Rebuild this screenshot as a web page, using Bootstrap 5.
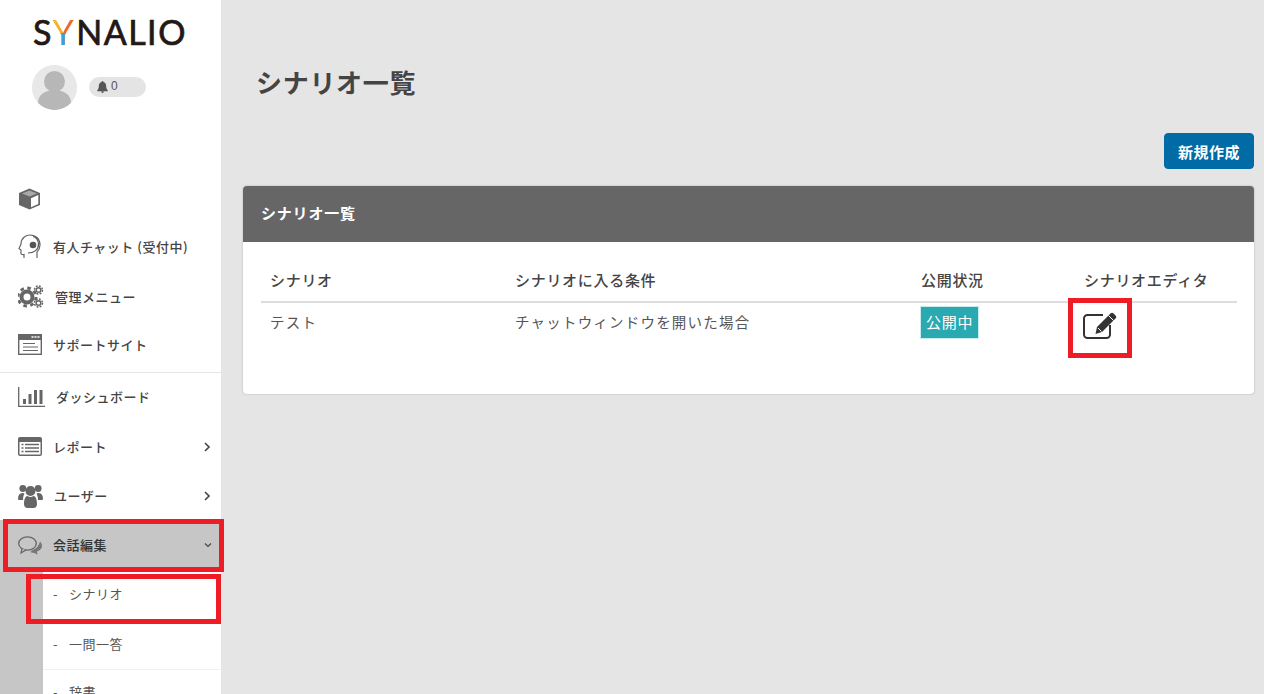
<!DOCTYPE html>
<html lang="ja">
<head>
<meta charset="utf-8">
<title>シナリオ一覧</title>
<link href="https://cdn.jsdelivr.net/npm/bootstrap@5.3.0/dist/css/bootstrap.min.css" rel="stylesheet">
<style>
html,body{height:694px;overflow:hidden}
body{font-family:"Noto Sans CJK JP","Liberation Sans",sans-serif;background:#e5e5e5;color:#444;position:relative}
.side{width:221px;height:694px;background:#fff;flex:none;overflow:hidden}
.brand{height:65px;padding:9px 0 0 33px;font-family:"Lato","Liberation Sans",sans-serif;font-size:34px;line-height:46px;letter-spacing:1.5px;color:#231815;font-weight:400;-webkit-text-stroke:.7px #231815;white-space:nowrap}
.brand-y{background:linear-gradient(#39a0e0,#39a0e0) bottom/100% 46% no-repeat,linear-gradient(90deg,#f6b12d 50%,#f0682b 50%);-webkit-background-clip:text;background-clip:text;color:transparent;-webkit-text-stroke:0;margin-right:1px}
.who{height:109px;padding-left:32px;align-items:flex-start}
.avatar{width:45px;height:45px;border-radius:50%;background:#e8e8e8;display:block}
.bell{width:57px;height:20px;border-radius:10px;background:#e4e4e4;margin:12px 0 0 12px;font-family:"Liberation Sans",sans-serif;font-size:12px;line-height:19px;padding-left:8px;color:#555}
.bell svg{width:11px;height:12px;vertical-align:-3px;margin-right:3px}
.nav-row{height:49.5px;padding-left:18px;padding-right:10px;font-size:13px;font-weight:500;color:#444;text-decoration:none;letter-spacing:.5px}
.nav-row svg.ico{flex:none;fill:#666;margin-right:11px}
.nudge{padding-bottom:2px}
.h49{height:49px}
.h485{height:48.5px}
.nav-sep{border-bottom:1px solid #e5e5e5;height:51px;padding-bottom:5px}
.nav-on{background:#c6c6c6;color:#333;height:50px}
.chev{margin-left:auto;width:8px;height:10px;fill:none;stroke:#444;stroke-width:1.6}
.chev-dn{width:8px;height:6px;margin-right:-1px}
.sub-wrap{background:#c6c6c6;padding-left:43px}
.sub-row{height:50px;background:#fff;border-bottom:1px solid #f1f1f1;padding-left:10px;font-size:13px;font-weight:400;color:#555;line-height:48px;white-space:nowrap;letter-spacing:.5px}
.sub-plain{border-bottom:0}
.sub-last{line-height:44px}
.sub-row i{font-style:normal;margin-right:11px}
.main{flex:1;min-width:0;padding:0 10px 0 22px}
.page-ttl{font-size:26px;font-weight:700;color:#444;line-height:38px;margin:63px 0 32px 13px;letter-spacing:.7px}
.add-btn{background:#006ba4;border:1px solid #006ba4;color:#fff;font-size:15px;font-weight:700;width:90px;height:36px;padding:0;border-radius:4px;line-height:33px;letter-spacing:.5px}
.panel{margin-top:17px;height:208px;border:0;border-radius:4px;box-shadow:0 0 2px rgba(0,0,0,.25)}
.panel-hd{background:#666;color:#fff;height:56px;padding:0 18px;font-size:15px;font-weight:700;line-height:54px;border:0;border-radius:4px 4px 0 0!important;letter-spacing:.8px}
.panel-bd{padding:18px 17px 0 18px}
.tbl{margin:0;table-layout:fixed;width:976px;color:#444;font-size:15px}
.tbl th{font-weight:500;padding:7px 9px 9px;line-height:25px;border-bottom:2px solid #ddd;color:#444;letter-spacing:.7px}
.tbl td{padding:3px 9px;line-height:31px;border:0;color:#555;font-size:14.5px;letter-spacing:1.2px}
.tbl .c1{width:245px}.tbl .c2{width:406px}.tbl .c3{width:163px}
.state{display:inline-block;background:#2aa9b0;color:#fff;border:1px solid #c8ecee;padding:0 5px;height:33px;line-height:30px;font-size:15px;letter-spacing:.8px;vertical-align:top;margin-left:-1px}
.edit-ico{display:block;margin:5px 0 0 -2px}
.red-box{position:absolute;border:5px solid #ee1c25;pointer-events:none}
.rb1{left:3px;top:519px;width:221px;height:53px}
.rb2{left:26px;top:574px;width:195px;height:50px}
.rb3{left:1068px;top:298px;width:64px;height:60px}
</style>
</head>
<body>
<div class="d-flex">
  <aside class="side">
    <div class="brand">S<span class="brand-y">Y</span>NALIO</div>
    <div class="who d-flex">
      <svg class="avatar" viewBox="0 0 45 45"><circle cx="22.500" cy="22.500" r="22.500" fill="#e8e8e8"/><circle cx="22.500" cy="16.500" r="10.500" fill="#b7b7b7"/><path d="M6 38c0-8 7-13 16.500-13S39 30 39 38c-4 4.500-10 7-16.500 7S10 42.500 6 38z" fill="#b7b7b7"/></svg>
      <div class="bell"><svg viewBox="0 0 12 13"><path d="M6 0a1 1 0 0 1 1 1.100C9 1.600 10 3.200 10 5.500c0 2.500.7 3.500 1.700 4.500v1H.3v-1C1.300 9 2 8 2 5.500 2 3.200 3 1.600 5 1.100A1 1 0 0 1 6 0zM4.500 11.500h3A1.500 1.500 0 0 1 4.500 11.500z" fill="#555"/></svg>0</div>
    </div>
    <a class="nav-row h49 d-flex align-items-center">
      <svg class="ico" width="23" height="22" viewBox="0 0 23 22"><path d="M11.500 .5 22 5v12L11.500 21.500 1 17V5z" fill="#666"/><path d="M11.500 2.500 19 5.500 11.500 8.500 4 5.500z" fill="#a8a8a8"/><path d="M13 10.200 20.300 7v9l-7.300 3.200z" fill="#fff"/></svg>
    </a>
    <a class="nav-row nudge d-flex align-items-center">
      <svg class="ico" width="24" height="25" viewBox="0 0 24 25"><path d="M6 24v-3.500c-3 .5-3.500-1.500-3-2.500v-2L1 14.500 3 10C3 4 8 1 12 1c6 0 10 4 10 10 0 3-1 5-3 7v6" fill="none" stroke="#666" stroke-width="1.200"/><circle cx="15" cy="11" r="3.300" fill="#555"/><path d="M15 2.500c3 .3 5.500 3.500 5.500 8 0 5-4.500 8.500-10.500 8.500" fill="none" stroke="#555" stroke-width="1.200"/></svg>
      <span>有人チャット (受付中)</span>
    </a>
    <a class="nav-row nudge d-flex align-items-center">
      <svg class="ico" width="26" height="25" viewBox="0 0 26 25"><g fill="none" stroke="#666"><circle cx="9" cy="13" r="5.500" stroke-width="4"/><circle cx="9" cy="13" r="9" stroke-width="2.800" stroke-dasharray="3.600 3.470"/><circle cx="20.500" cy="6" r="2.300" stroke-width="1.500"/><circle cx="20.500" cy="6" r="4" stroke-width="1.500" stroke-dasharray="1.800 1.340"/><circle cx="20.500" cy="19" r="2.300" stroke-width="1.500"/><circle cx="20.500" cy="19" r="4" stroke-width="1.500" stroke-dasharray="1.800 1.340"/></g></svg>
      <span>管理メニュー</span>
    </a>
    <a class="nav-row nav-sep d-flex align-items-center">
      <svg class="ico" width="24" height="21" viewBox="0 0 24 21"><rect x=".7" y=".7" width="22.600" height="19.600" fill="none" stroke="#666" stroke-width="1.400"/><rect x="0" y="0" width="24" height="6" fill="#666"/><path d="M13.500 3h2M16.500 3h2M19.500 3h2" stroke="#fff" stroke-width="1.500"/><path d="M5 9.500h12M5 13h15M5 16.500h15" stroke="#666" stroke-width="1.200"/></svg>
      <span>サポートサイト</span>
    </a>
    <a class="nav-row h49 nudge d-flex align-items-center">
      <svg class="ico" width="27" height="20" viewBox="0 0 27 20"><path d="M.7 0v19.300H27" fill="none" stroke="#666" stroke-width="1.300"/><path d="M5 12h3v5H5zM10.500 7h3v10h-3zM16 3h3v14h-3zM21.500 3h3v14h-3z" fill="#666"/></svg>
      <span>ダッシュボード</span>
    </a>
    <a class="nav-row d-flex align-items-center">
      <svg class="ico" width="24" height="19" viewBox="0 0 24 19"><rect width="24" height="19" rx="2" fill="#666"/><rect x="1.500" y="5" width="21" height="12.500" fill="#fff"/><path d="M3.500 7.500h2M7 7.500h14M3.500 11h2M7 11h14M3.500 14.500h2M7 14.500h14" stroke="#666" stroke-width="1.500"/></svg>
      <span>レポート</span>
      <svg class="chev" viewBox="0 0 8 10"><path d="M2 1l4 4-4 4"/></svg>
    </a>
    <a class="nav-row h485 d-flex align-items-center">
      <svg class="ico" width="25" height="24" viewBox="0 0 25 24"><circle cx="4.800" cy="4.500" r="3.400"/><circle cx="20.200" cy="4.500" r="3.400"/><circle cx="12.500" cy="7" r="5"/><path d="M0 15c0-4 1.500-6 4.500-6 1 0 1.500.3 2 .7C5.700 11 5 13 5 16H1.500C.5 16 0 15.700 0 15zM25 15c0-4-1.500-6-4.500-6-1 0-1.500.3-2 .7.800 1.300 1.500 3.300 1.500 6.300h3.500c1 0 1.500-.3 1.500-1z"/><path d="M6 20c0-5 1.500-8 3.500-8 1 .7 2 1 3 1s2-.3 3-1c2 0 3.500 3 3.500 8 0 2.500-1.500 4-3.500 4h-6C7.500 24 6 22.500 6 20z"/></svg>
      <span>ユーザー</span>
      <svg class="chev" viewBox="0 0 8 10"><path d="M2 1l4 4-4 4"/></svg>
    </a>
    <a class="nav-row nav-on d-flex align-items-center">
      <svg class="ico" width="24" height="19" viewBox="0 0 24 19"><path d="M14 14.500c-1 .5-1.500 1.800-1.500 1.800 3 .7 5 .7 7 2.700-.3-1.500-.5-2.700-.5-3.500 3-1 5-3.200 5-5.500 0-1.800-.8-3.300-2-4.500-1 4.500-4 7.500-8 9z" fill="#777"/><ellipse cx="9.500" cy="7.500" rx="8.800" ry="6.700" fill="none" stroke="#666" stroke-width="1.300"/><path d="M4 13 3 17l5-3" fill="#c6c6c6" stroke="#666" stroke-width="1.200"/></svg>
      <span>会話編集</span>
      <svg class="chev chev-dn" viewBox="0 0 10 8"><path d="M1 2l4 4 4-4"/></svg>
    </a>
    <div class="sub-wrap">
      <div class="sub-row sub-plain"><i>-</i>シナリオ</div>
      <div class="sub-row"><i>-</i>一問一答</div>
      <div class="sub-row sub-last"><i>-</i>辞書</div>
    </div>
  </aside>
  <main class="main">
    <h1 class="page-ttl">シナリオ一覧</h1>
    <div class="d-flex justify-content-end"><button type="button" class="btn add-btn">新規作成</button></div>
    <div class="card panel">
      <div class="card-header panel-hd">シナリオ一覧</div>
      <div class="card-body panel-bd">
        <table class="table tbl">
          <thead><tr><th class="c1">シナリオ</th><th class="c2">シナリオに入る条件</th><th class="c3">公開状況</th><th>シナリオエディタ</th></tr></thead>
          <tbody><tr>
            <td>テスト</td><td>チャットウィンドウを開いた場合</td><td><span class="state">公開中</span></td>
            <td><svg class="edit-ico" width="36" height="29" viewBox="0 0 36 29"><path d="M21 4H5.500A3.500 3.500 0 0 0 2 7.500v16A3.500 3.500 0 0 0 5.500 27h19a3.500 3.500 0 0 0 3.500-3.500V14" fill="none" stroke="#333" stroke-width="2"/><path d="M15 16 28.500 2.500c1-1 2-1 3 0l2 2c1 1 1 2 0 3L20 21l-6.500 2z" fill="#333"/><path d="M26.500 4.500l5 5M16 17l3.500 3.500" stroke="#fff" stroke-width="1"/></svg></td>
          </tr></tbody>
        </table>
      </div>
    </div>
  </main>
</div>
<div class="red-box rb1"></div>
<div class="red-box rb2"></div>
<div class="red-box rb3"></div>
</body>
</html>
